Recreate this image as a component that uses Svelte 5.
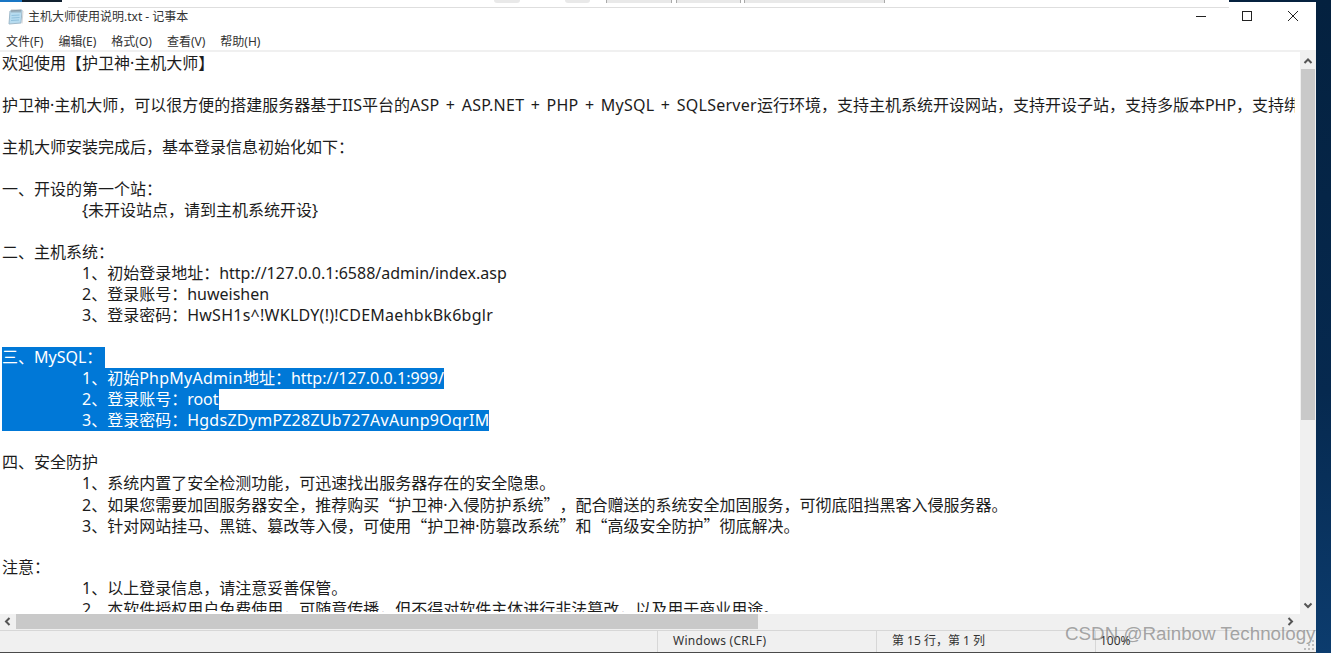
<script>
  const T = '\t';
  // In each line, text between | marks is Latin text set slightly wider.
  const lines = [
    { t: '欢迎使用【护卫神·主机大师】' },
    { t: '' },
    { t: '护卫神·主机大师，可以很方便的搭建服务器基于IIS平台的|ASP + ASP.NET + PHP + MySQL + SQLServer|运行环境，支持主机系统开设网站，支持开设子站，支持多版本PHP，支持绑定域名，支持伪静态。' },
    { t: '' },
    { t: '主机大师安装完成后，基本登录信息初始化如下：' },
    { t: '' },
    { t: '一、开设的第一个站：' },
    { t: T + '{未开设站点，请到主机系统开设}' },
    { t: '' },
    { t: '二、主机系统：' },
    { t: T + '1、初始登录地址：http://127.0.0.1:6588/admin/index.asp' },
    { t: T + '2、登录账号：huweishen' },
    { t: T + '3、登录密码：|HwSH1s^!WKLDY(!)!CDEMaehbkBk6bglr|' },
    { t: '' },
    { t: '三、MySQL：', sel: true, first: true },
    { t: T + '1、初始|PhpMyAdmin|地址：http://127.0.0.1:999/', sel: true },
    { t: T + '2、登录账号：root', sel: true },
    { t: T + '3、登录密码：|HgdsZDymPZ28ZUb727AvAunp9OqrIM|', sel: true },
    { t: '' },
    { t: '四、安全防护' },
    { t: T + '1、系统内置了安全检测功能，可迅速找出服务器存在的安全隐患。' },
    { t: T + '2、如果您需要加固服务器安全，推荐购买“护卫神·入侵防护系统”，配合赠送的系统安全加固服务，可彻底阻挡黑客入侵服务器。' },
    { t: T + '3、针对网站挂马、黑链、篡改等入侵，可使用“护卫神·防篡改系统”和“高级安全防护”彻底解决。' },
    { t: '' },
    { t: '注意：' },
    { t: T + '1、以上登录信息，请注意妥善保管。' },
    { t: T + '2、本软件授权用户免费使用，可随意传播，但不得对软件主体进行非法篡改，以及用于商业用途。' }
  ];
  const menus = ['文件(F)', '编辑(E)', '格式(O)', '查看(V)', '帮助(H)'];
  const chunks = (s) => s.split('|');
  const parts = (s) => s.split(/([“”])/);
  const isQuote = (s) => s === '“' || s === '”';
</script>

{#snippet content(l)}
  {#each chunks(l.t) as c, i}{#if i % 2}<span class="pw">{c}</span>{:else}{#each parts(c) as p}{#if isQuote(p)}<span class="cjk">{p}</span>{:else}{p}{/if}{/each}{/if}{/each}
{/snippet}

<div class="screen">
  <div class="window">
    <div class="strip">
      <div class="strip-blue"></div>
      <div class="strip-dark"></div>
      <div class="strip-gap"></div>
      <div class="strip-mid">
        <i class="tab t1"></i><i class="tab t2"></i><i class="tab t3"></i><i class="tab t4"></i><i class="tab t5"></i>
      </div>
      <div class="strip-end"></div>
    </div>

    <div class="titlebar">
      <svg class="app-icon" width="17" height="17" viewBox="0 0 17 17">
        <path d="M3 3 L15 2 L14 15 L2 16 Z" fill="#b7dcf0" stroke="#9fb9ca" stroke-width="1"/>
        <path d="M4.5 7.5l8-.5M4.5 10l8-.5M4 12.5l8-.5" stroke="#8fc0dc" stroke-width="1"/>
        <path d="M5 1.5v3M7 1.5v3M9 1.5v3M11 1.5v3M13 1.5v3" stroke="#7d868e" stroke-width="1"/>
        <path d="M16 3l-1 12.5" stroke="#d4d6d9" stroke-width="1"/>
      </svg>
      <span class="title">主机大师使用说明.txt - 记事本</span>
      <div class="controls">
        <button aria-label="最小化"><svg width="12" height="12" viewBox="0 0 12 12"><path d="M1 6.5h10" stroke="#222" stroke-width="1"/></svg></button>
        <button aria-label="最大化"><svg width="12" height="12" viewBox="0 0 12 12"><rect x="1.5" y="1.5" width="9" height="9" fill="none" stroke="#222" stroke-width="1"/></svg></button>
        <button aria-label="关闭"><svg width="12" height="12" viewBox="0 0 12 12"><path d="M1 1l10 10M11 1L1 11" stroke="#222" stroke-width="1"/></svg></button>
      </div>
    </div>

    <div class="menubar">
      {#each menus as m}<span>{m}</span>{/each}
    </div>

    <div class="client">
      <div class="editor-row">
        <div class="editor">
          {#each lines as l}
            <div class="line">{#if l.sel}<span class="sel" class:first={l.first}>{@render content(l)}</span>{:else if l.t}{@render content(l)}{:else}{' '}{/if}</div>
          {/each}
        </div>
        <div class="vscroll">
          <svg class="arrow" width="16" height="17" viewBox="0 0 16 17"><path d="M4.5 11 L8 7.5 L11.5 11" fill="none" stroke="#555" stroke-width="2"/></svg>
          <div class="vthumb"></div>
          <div class="vrest"></div>
          <svg class="arrow" width="16" height="17" viewBox="0 0 16 17"><path d="M4.5 6.5 L8 10 L11.5 6.5" fill="none" stroke="#555" stroke-width="2"/></svg>
        </div>
      </div>
      <div class="hscroll">
        <svg class="harrow" width="16" height="15" viewBox="0 0 16 15"><path d="M9.5 4 L6 7.5 L9.5 11" fill="none" stroke="#555" stroke-width="2"/></svg>
        <div class="hthumb"></div>
        <div class="hrest"></div>
        <svg class="harrow" width="16" height="15" viewBox="0 0 16 15"><path d="M6.5 4 L10 7.5 L6.5 11" fill="none" stroke="#555" stroke-width="2"/></svg>
        <div class="corner"></div>
      </div>
    </div>

    <div class="status">
      <div class="s s1"></div>
      <div class="s s2">Windows (CRLF)</div>
      <div class="s s3">第 15 行，第 1 列</div>
      <div class="s s4">100%</div>
      <svg class="grip" width="11" height="11" viewBox="0 0 11 11" fill="#bdbdbd">
        <rect x="8" y="0" width="2" height="2"/><rect x="4" y="4" width="2" height="2"/><rect x="8" y="4" width="2" height="2"/>
        <rect x="0" y="8" width="2" height="2"/><rect x="4" y="8" width="2" height="2"/><rect x="8" y="8" width="2" height="2"/>
      </svg>
    </div>
    <div class="edge"></div>
  </div>
  <div class="desktop"></div>
  <div class="watermark">CSDN @Rainbow Technology</div>
</div>

<style>
  :global(body) {
    margin: 0;
    background: #fff;
  }
  .screen {
    position: relative;
    display: flex;
    width: 1331px;
    height: 653px;
    overflow: hidden;
    font-family: "Noto Sans", "Noto Sans CJK SC", sans-serif;
    color: #1c1c1c;
  }
  .window {
    width: 1316px;
    display: flex;
    flex-direction: column;
    background: #fff;
  }
  .desktop {
    width: 15px;
    background: linear-gradient(180deg, #04213f 0%, #06294f 60%, #0c3c6e 100%);
  }

  .strip {
    display: flex;
    height: 8px;
    flex: none;
  }
  .strip-blue {
    width: 22px;
    height: 2px;
    background: #1976c4;
  }
  .strip-dark {
    width: 40px;
    height: 2px;
    background: #10202f;
  }
  .strip-gap {
    width: 6px;
  }
  .strip-mid {
    position: relative;
    width: 1161px;
    border-bottom: 1px solid #dedede;
    box-sizing: border-box;
    height: 8px;
  }
  .strip-end {
    flex: 1;
    height: 2px;
    background: #05213f;
  }
  .tab {
    position: absolute;
    top: 0;
    height: 3px;
    background: #e9e9e9;
  }
  .t1 { left: 426px; width: 26px; border-radius: 0 0 3px 3px; }
  .t2 { left: 497px; width: 25px; border-radius: 0 0 3px 3px; }
  .t3 { left: 538px; width: 64px; border-left: 1px solid #aaa; border-right: 1px solid #aaa; }
  .t4 { left: 608px; width: 63px; border-left: 1px solid #aaa; border-right: 1px solid #aaa; }
  .t5 { left: 676px; width: 139px; border-left: 1px solid #aaa; border-right: 1px solid #aaa; }

  .titlebar {
    display: flex;
    align-items: center;
    height: 22px;
    flex: none;
    box-sizing: border-box;
    padding: 0 0 6px 7px;
  }
  .app-icon {
    flex: none;
    margin-right: 4px;
  }
  .title {
    font-size: 12px;
    white-space: pre;
    color: #333;
  }
  .controls {
    margin-left: auto;
    display: flex;
    align-self: stretch;
  }
  .controls button {
    width: 46px;
    padding: 0;
    border: 0;
    background: transparent;
    display: flex;
    align-items: center;
    justify-content: center;
  }

  .menubar {
    display: flex;
    gap: 15px;
    align-items: center;
    flex: none;
    padding: 2px 0 0 6px;
    box-sizing: border-box;
    border-bottom: 2px solid #f0f0f0;
    height: 22px;
    font-size: 12px;
    color: #333;
  }

  .client {
    display: flex;
    flex-direction: column;
    height: 578px;
    flex: none;
  }
  .editor-row {
    display: flex;
    height: 562px;
    flex: none;
  }
  .editor {
    width: 1295px;
    height: 560px;
    padding-left: 2px;
    padding-top: 1px;
    box-sizing: border-box;
    overflow: hidden;
    font-size: 16px;
    line-height: 21px;
    margin-right: 5px;
    tab-size: 80px;
    word-spacing: 2px;
    text-spacing-trim: space-all;
  }
  .line {
    height: 21px;
    white-space: pre;
  }
  .cjk {
    font-family: "Noto Sans CJK SC", sans-serif;
  }
  .pw {
    letter-spacing: 0.26px;
  }
  .sel {
    display: inline-block;
    height: 21px;
    line-height: 21px;
    background: #0078d7;
    color: #fff;
  }
  .sel.first {
    padding-right: 3px;
  }
  .vscroll {
    width: 16px;
    display: flex;
    flex-direction: column;
    background: #f0f0f0;
  }
  .arrow, .harrow {
    flex: none;
    display: block;
  }
  .vthumb {
    height: 351px;
    margin: 0 1px;
    background: #c9c9c9;
    flex: none;
  }
  .vrest {
    flex: 1;
  }
  .hscroll {
    display: flex;
    height: 16px;
    flex: none;
    background: #f0f0f0;
  }
  .hthumb {
    width: 742px;
    height: 15px;
    background: #c9c9c9;
    flex: none;
  }
  .hrest {
    flex: 1;
  }
  .corner {
    width: 18px;
    flex: none;
  }

  .status {
    position: relative;
    display: flex;
    height: 21px;
    flex: none;
    background: #f0f0f0;
    border-top: 1px solid #d7d7d7;
    font-size: 12px;
    line-height: 20px;
    color: #333;
  }
  .s {
    box-sizing: border-box;
    border-left: 1px solid #d7d7d7;
    white-space: pre;
  }
  .s1 { width: 657px; border-left: 0; }
  .s2 { width: 219px; padding-left: 15px; letter-spacing: 0.28px; }
  .s3 { width: 219px; padding-left: 15px; }
  .s4 { flex: 1; padding-left: 4px; }
  .grip {
    position: absolute;
    right: 1px;
    bottom: 1px;
  }
  .edge {
    flex: 1;
    background: #4a4a4a;
  }
  .watermark {
    position: absolute;
    left: 1065px;
    top: 622px;
    font-family: "Liberation Sans", sans-serif;
    font-size: 18.8px;
    line-height: 24px;
    white-space: pre;
    color: rgba(120, 120, 120, 0.65);
  }
</style>
